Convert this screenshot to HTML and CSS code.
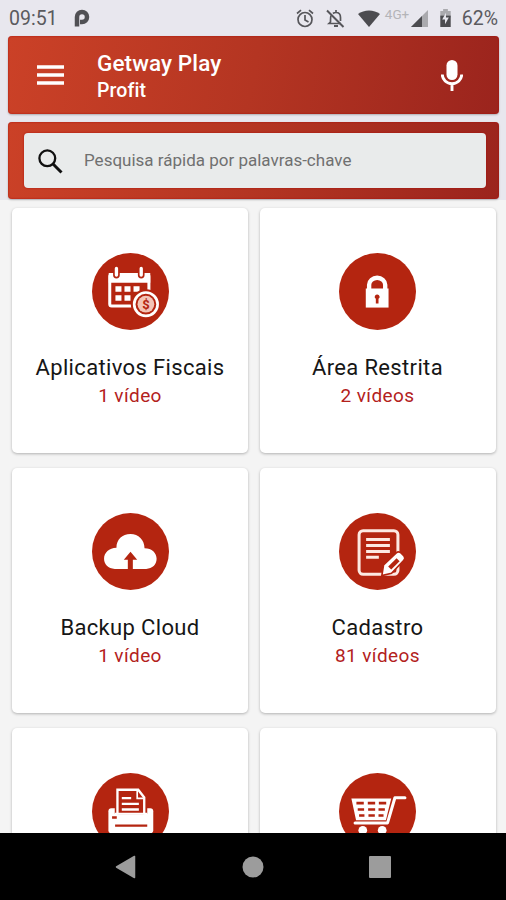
FILE: index.html
```html
<!DOCTYPE html>
<html lang="pt-BR">
<head>
    <meta charset="UTF-8">
    <meta name="viewport" content="width=device-width, initial-scale=1.0">
    <title>Getway Play</title>
    <link rel="stylesheet" href="styles.css">
</head>
<body>
    <div class="status-bar">
        <span class="clock">09:51</span>
        <svg class="icon-p" width="16" height="18" viewBox="0 0 16 18"><path d="M3 17.500V8a5 5 0 1 1 5 5H6" fill="none" stroke="#505054" stroke-width="4.500"/></svg>
        <div class="status-icons">
            <svg class="icon-alarm" width="18" height="19" viewBox="0 0 18 19" fill="none" stroke="#56565a" stroke-width="1.700"><circle cx="9" cy="10.500" r="7"/><path d="M9 6v5l3.500 2M1 4.500l4-3.300M17 4.500l-4-3.300"/></svg>
            <svg class="icon-bell" width="19" height="19" viewBox="0 0 19 19" fill="none" stroke="#56565a" stroke-width="1.700"><path d="M5 6.500C4.400 8 4.500 10 4.500 13L3 14.500h12M7 4.500C8 3.600 9 3.500 10 3.500c3 0 4.500 2 4.500 5V12M10 1v2"/><path d="M1 1.500l16.500 16.500" stroke-width="1.900"/><path d="M8 17h4" stroke-width="2"/></svg>
            <svg class="icon-wifi" width="22" height="17" viewBox="0 0 22 17"><path d="M0 4C6-.8 16-.8 22 4L11 17z" fill="#4c4c50"/></svg>
            <span class="network">4G+</span>
            <svg class="icon-signal" width="17" height="17" viewBox="0 0 17 17"><path d="M0 17L17 0v17z" fill="#aaaaae"/><path d="M0 17L11 6v11z" fill="#4c4c50"/></svg>
            <svg class="icon-battery" width="11" height="18" viewBox="0 0 11 19"><path d="M0 2h3V0h5v2h3v7H0z" fill="#aaaaae"/><path d="M0 7h11v12H0z" fill="#4c4c50"/><path d="M6 4L2 11h3v5l4-7H6z" fill="#e8e7ee"/></svg>
            <span class="percent">62%</span>
        </div>
    </div>

    <div class="toolbar">
        <svg class="icon-menu" width="27" height="20" viewBox="0 0 27 20"><path d="M0 2h27M0 10h27M0 18h27" stroke="#fff" stroke-width="3.400"/></svg>
        <div class="heading">
            <h1>Getway Play</h1>
            <h2>Profit</h2>
        </div>
        <svg class="icon-mic" width="22" height="31" viewBox="0 0 22 31"><rect x="5.500" y="0" width="11" height="20" rx="5.500" fill="#fff"/><path d="M1.300 14.500a9.700 9.200 0 0 0 19.400 0M11 23.500V31" fill="none" stroke="#fff" stroke-width="2.900"/></svg>
    </div>

    <div class="search">
        <div class="search-box">
            <svg width="25" height="25" viewBox="0 0 25 25" fill="none" stroke="#111"><circle cx="9.300" cy="9.300" r="7.900" stroke-width="2.300"/><path d="M14.800 14.800l8.700 8.700" stroke-width="3"/></svg>
            <span>Pesquisa rápida por palavras-chave</span>
        </div>
    </div>

    <div class="grid">
        <div class="card">
            <svg class="badge" viewBox="36 38 230 230">
                <circle cx="151" cy="153" r="115" fill="#b42510"/>
                <rect x="89" y="102" width="117" height="94" rx="6" fill="none" stroke="#fff" stroke-width="9"/>
                <path d="M86 98h124v29H86z" fill="#fff"/>
                <path d="M109 84v20M183 84v20" stroke="#b42510" stroke-width="20" stroke-linecap="round"/>
                <path d="M109 84v20M183 84v20" stroke="#fff" stroke-width="10" stroke-linecap="round"/>
                <path d="M106 137h18v17h-18zM133 137h18v17h-18zM160 137h18v17h-18zM106 164h18v17h-18zM133 164h18v17h-18z" fill="#fff"/>
                <circle cx="197" cy="191" r="45" fill="#b42510"/>
                <circle cx="197" cy="191" r="35" fill="#b42510" stroke="#fff" stroke-width="8"/>
                <circle cx="197" cy="191" r="25" fill="#f3c4b6"/>
                <text class="coin" x="197" y="205" text-anchor="middle">$</text>
            </svg>
            <div class="name">Aplicativos Fiscais</div>
            <div class="count">1 vídeo</div>
        </div>
        <div class="card">
            <svg class="badge" viewBox="35 38 230 230">
                <circle cx="150" cy="153" r="115" fill="#b42510"/>
                <path d="M125 148v-15a24 21 0 0 1 48 0v15" fill="none" stroke="#fff" stroke-width="13"/>
                <path d="M115 144h68v57h-68z" fill="#fff"/>
                <path d="M149 162a7 7 0 0 1 4 13v14h-8v-14a7 7 0 0 1 4-13z" fill="#b42510"/>
            </svg>
            <div class="name">Área Restrita</div>
            <div class="count">2 vídeos</div>
        </div>
        <div class="card">
            <svg class="badge" viewBox="36 38 230 230">
                <circle cx="151" cy="153" r="115" fill="#b42510"/>
                <path d="M104 205c-20 0-32-14-32-30 0-18 15-33 37-33 0-24 17-41 42-41 24 0 41 17 42 42 22 0 36 14 36 32 0 17-13 30-31 30z" fill="#fff"/>
                <path d="M151 154l20 24h-13v27h-15v-27h-12z" fill="#b42510"/>
            </svg>
            <div class="name">Backup Cloud</div>
            <div class="count">1 vídeo</div>
        </div>
        <div class="card">
            <svg class="badge" viewBox="35 38 230 230">
                <circle cx="150" cy="153" r="115" fill="#b42510"/>
                <rect x="95" y="91" width="116" height="130" rx="12" fill="none" stroke="#fde9e2" stroke-width="9"/>
                <path d="M116 117h71M116 135h71M116 153h71M116 170h38" stroke="#fde9e2" stroke-width="9"/>
                <path d="M163 225l5-32 38-36q7-6 15 1l8 8q6 7-1 14l-36 38z" fill="#fff" stroke="#b42510" stroke-width="5"/>
                <path d="M182 198l25-25 9 9-25 25z" fill="#b42510"/>
            </svg>
            <div class="name">Cadastro</div>
            <div class="count">81 vídeos</div>
        </div>
        <div class="card">
            <svg class="badge" viewBox="36 38 230 230">
                <circle cx="151" cy="153" r="115" fill="#b42510"/>
                <path d="M94 143h116q9 0 9 9v57q0 9-9 9H94q-9 0-9-9v-57q0-9 9-9z" fill="#fff"/>
                <path d="M104 142h97v18h-97z" fill="#b42510"/>
                <path d="M112 161V88h62l18 23v50" fill="#b42510" stroke="#fff" stroke-width="7"/>
                <path d="M104 160h97" stroke="#fff" stroke-width="6"/>
                <path d="M171 91v23h19" fill="none" stroke="#fff" stroke-width="5"/>
                <path d="M125 113h28M125 130h51M125 147h51" stroke="#fff" stroke-width="7"/>
                <path d="M96 171h14M105 195h96" stroke="#b42510" stroke-width="7"/>
            </svg>
        </div>
        <div class="card">
            <svg class="badge" viewBox="35 38 230 230">
                <circle cx="150" cy="153" r="115" fill="#b42510"/>
                <path d="M72 114h119l-16 65H86z" fill="#fff"/>
                <path d="M87 128h22M121 128h22M154 128h22M91 147h19M122 147h21M153 147h19M95 165h16M123 165h19M153 165h15" stroke="#b42510" stroke-width="8"/>
                <path d="M232 112h-30l-22 75H83" fill="none" stroke="#fff" stroke-width="9" stroke-linecap="round" stroke-linejoin="round"/>
                <circle cx="106" cy="209" r="13" fill="#fff"/>
                <circle cx="164" cy="209" r="13" fill="#fff"/>
            </svg>
        </div>
    </div>

    <div class="nav-bar">
        <svg width="21" height="24" viewBox="0 0 21 24"><path d="M19.500 1.500v21L1.500 12z" fill="#9c9c9c" stroke="#9c9c9c" stroke-width="1.500" stroke-linejoin="round"/></svg>
        <svg width="22" height="22" viewBox="0 0 22 22"><circle cx="11" cy="11" r="10.500" fill="#9c9c9c"/></svg>
        <svg width="22" height="22" viewBox="0 0 22 22"><rect width="22" height="22" rx="1" fill="#9c9c9c"/></svg>
    </div>
</body>
</html>
```

FILE: styles.css
```css
* {
    box-sizing: border-box;
}

body {
    display: flex;
    flex-direction: column;
    height: 900px;
    margin: 0;
    overflow: hidden;
    font-family: Roboto, "Liberation Sans", sans-serif;
    background: linear-gradient(#e8e7ee 200px, #f4f4f4 200px);
}

svg {
    display: block;
    flex: none;
}

.status-bar {
    display: flex;
    align-items: center;
    flex: none;
    height: 36px;
    padding: 0 8px 0 9px;
    font-size: 19.5px;
    color: #5a5a5e;
}

.icon-p {
    margin-left: 16px;
}

.status-icons {
    display: flex;
    align-items: center;
    margin-left: auto;
}

.icon-alarm {
    margin-right: 12px;
}

.icon-wifi {
    margin-left: 13px;
}

.network {
    width: 25px;
    margin: 0 0 9px 5px;
    font-size: 13.5px;
    color: #b4b4b8;
}

.icon-signal {
    margin-left: 1px;
}

.icon-battery {
    margin: 0 11px 0 12px;
}

.toolbar, .search {
    flex: none;
    margin: 0 7px 0 8px;
    border-radius: 4px;
    background: linear-gradient(100deg, #cb4127, #b43522 50%, #9b241d);
    box-shadow: 0 1px 2px rgba(0,0,0,0.25), inset 0 0 2px #a80c08;
}

.toolbar {
    display: flex;
    align-items: center;
    height: 78px;
    padding: 0 36px 0 29px;
    color: #fff;
}

.heading {
    flex: 1;
    padding-top: 4px;
    margin-left: 33px;
}

.heading h1, .heading h2 {
    margin: 0;
    font-weight: 500;
    line-height: 28px;
}

.heading h1 {
    font-size: 22.5px;
    letter-spacing: 0.1px;
}

.heading h2 {
    font-size: 19.5px;
    letter-spacing: 0.1px;
}

.search {
    height: 77px;
    margin-top: 8px;
    padding: 11px 13px 11px 16px;
}

.search-box {
    display: flex;
    align-items: center;
    height: 55px;
    padding: 2px 0 0 14px;
    border-radius: 4px;
    background: #e9ebeb;
    box-shadow: 0 0 2px #a80c08;
}

.search-box span {
    margin-left: 21px;
    padding-bottom: 3px;
    font-size: 17px;
    color: #707070;
}

.grid {
    display: grid;
    grid-template-columns: 1fr 1fr;
    grid-auto-rows: 245px;
    gap: 15px 11.5px;
    flex: 1;
    min-height: 0;
    padding: 9px 10.5px 0 12px;
    overflow: hidden;
}

.card {
    padding-top: 45px;
    border-radius: 5px;
    background: #fff;
    box-shadow: 0 1px 3px rgba(0,0,0,0.28);
    text-align: center;
}

.badge {
    width: 77px;
    height: 77px;
    margin: 0 auto;
}

.coin {
    font-size: 39px;
    font-weight: 700;
    fill: #b42510;
}

.name {
    margin-top: 23px;
    font-size: 22px;
    line-height: 30px;
    letter-spacing: 0.35px;
    color: #161616;
}

.count {
    font-size: 19px;
    line-height: 25px;
    letter-spacing: 0.4px;
    color: #b3211c;
}

.nav-bar {
    display: flex;
    align-items: center;
    justify-content: space-between;
    flex: none;
    height: 67px;
    padding: 0 115px;
    background: #000;
}
```
